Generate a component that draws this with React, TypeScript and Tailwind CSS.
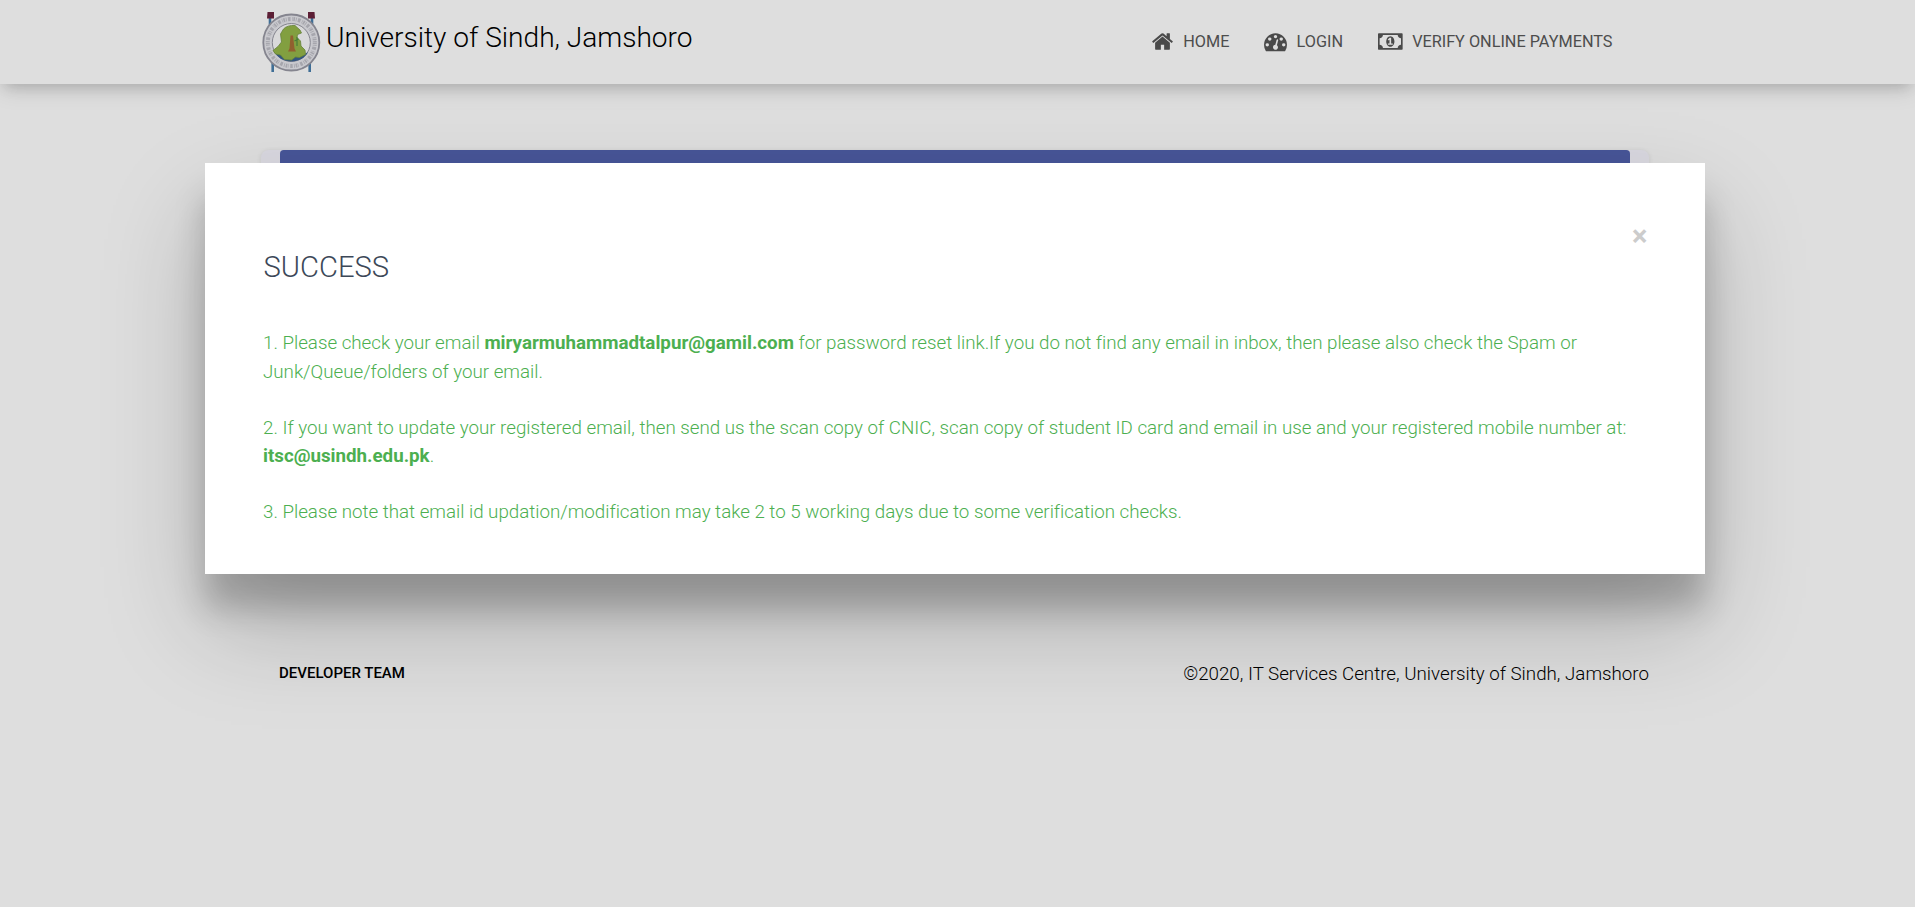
import type { ReactNode } from 'react';

const icons = {
  home: {
    viewBox: '0 0 1792 1792',
    d: 'M1472 992v480q0 26-19 45t-45 19h-384v-384h-256v384h-384q-26 0-45-19t-19-45v-480q0-1 .5-3t.5-3l575-474 575 474q1 2 1 6zm223-69l-62 74q-8 9-21 11h-3q-13 0-21-7l-692-577-692 577q-12 8-24 7-13-2-21-11l-62-74q-8-10-7-23.5t11-21.5l719-599q32-26 76-26t76 26l244 204v-195q0-14 9-23t23-9h192q14 0 23 9t9 23v408l219 182q10 8 11 21.5t-7 23.5z',
  },
  gauge: {
    viewBox: '0 0 1792 1792',
    d: 'M384 1152q0-53-37.5-90.5t-90.5-37.5-90.5 37.5-37.5 90.5 37.5 90.5 90.5 37.5 90.5-37.5 37.5-90.5zm192-448q0-53-37.5-90.5t-90.5-37.5-90.5 37.5-37.5 90.5 37.5 90.5 90.5 37.5 90.5-37.5 37.5-90.5zm428 481l101-382q6-26-7.5-48.5t-38.5-29.5-48 6.5-30 39.5l-101 382q-60 5-107 43.5t-63 98.5q-20 77 20 146t117 89 146-20 89-117q16-60-6-117t-72-91zm660-33q0-53-37.5-90.5t-90.5-37.5-90.5 37.5-37.5 90.5 37.5 90.5 90.5 37.5 90.5-37.5 37.5-90.5zm-640-640q0-53-37.5-90.5t-90.5-37.5-90.5 37.5-37.5 90.5 37.5 90.5 90.5 37.5 90.5-37.5 37.5-90.5zm448 192q0-53-37.5-90.5t-90.5-37.5-90.5 37.5-37.5 90.5 37.5 90.5 90.5 37.5 90.5-37.5 37.5-90.5zm320 448q0 261-141 483-19 29-54 29h-1402q-35 0-54-29-141-221-141-483 0-182 71-348t191-286 286-191 348-71 348 71 286 191 191 286 71 348z',
  },
  money: {
    viewBox: '0 0 1920 1792',
    d: 'M768 1152h384v-96h-128v-448h-114l-148 137 77 80q42-37 55-57h2v288h-128v96zm512-256q0 70-21 142t-59.5 134-101.5 101-138 39-138-39-101.5-101-59.5-134-21-142 21-142 59.5-134 101.5-101 138-39 138 39 101.5 101 59.5 134 21 142zm512 256v-512q-106 0-181-75t-75-181h-1152q0 106-75 181t-181 75v512q106 0 181 75t75 181h1152q0-106 75-181t181-75zm128-832v1152q0 26-19 45t-45 19h-1792q-26 0-45-19t-19-45v-1152q0-26 19-45t45-19h1792q26 0 45 19t19 45z',
  },
};

function NavLink({ icon, className, children }: { icon: keyof typeof icons; className: string; children: ReactNode }) {
  return (
    <a href="#" className={`flex items-start ${className}`}>
      <svg viewBox={icons[icon].viewBox} className="mt-px h-[23px] w-auto shrink-0 fill-[#4a4a4a]" aria-hidden="true">
        <path d={icons[icon].d} />
      </svg>
      <span className="pt-px text-[16.25px] leading-6 whitespace-nowrap text-[#4d4d4d]">{children}</span>
    </a>
  );
}

function Crest() {
  return (
    <svg viewBox="0 0 60 60" className="size-[60px] shrink-0" aria-hidden="true">
      <path d="M8 6v12M50 6v12M10.700 48v12M47.700 48v12" stroke="#3f6e96" strokeWidth="2.600" />
      <path d="M5.500 0h6.500v6.500h-7z M46 0h6.500l.5 6.500h-7z" fill="#5c1f35" />
      <circle cx="29.300" cy="30.500" r="28" fill="#c9c9ce" stroke="#85858f" strokeWidth="1.800" />
      <circle cx="29.300" cy="30.500" r="23.500" fill="none" stroke="#73737e" strokeWidth="4" strokeDasharray="1.600 .9 .8 1.300 2.600 1.700 .6 .7" opacity=".4" />
      <circle cx="29.300" cy="30.500" r="19" fill="#d9d9da" stroke="#85858f" strokeWidth="1" />
      <path d="M11.500 38.500c5 2.500 8 3 14 5 8 1.500 16 .5 20.500-3.500-3 6-9 9.500-16.500 9.500-8 0-14.500-4-18-11z" fill="#33557f" />
      <path d="M21.500 17c2-2.500 7-4 11.500-3.500l5 4.500 1.500 3-4 1.500-.5 3 3.500 3.500.5 5 4 4 .5 4.500-6 3-4-.5-4 3-7-.5-4-4.500-5-1-2.500-3.500 5-4 3.500-4.500-.5-4-.5-4z" fill="#829f40" stroke="#66833a" strokeWidth=".8" />
      <path d="M28.500 23.500h2.500l1.500 13 1.500 3h-8l1.500-3z" fill="#91602f" />
      <path d="M35 25v9M32.500 29l4-2" stroke="#467e38" strokeWidth="1.200" />
    </svg>
  );
}

export default function App() {
  return (
    <div className="relative h-screen overflow-hidden bg-[#dedede] font-['Roboto',sans-serif] text-[18.75px] font-light">
      <header className="relative h-[84px] bg-[#dedede] shadow-[0_5px_22.5px_0_rgba(0,0,0,0.12),0_8.75px_12.5px_-6.25px_rgba(0,0,0,0.15)]">
        <div className="flex items-start justify-between pr-[302.5px] pl-[262px]">
          <a href="#" className="flex items-start gap-1 pt-3">
            <Crest />
            <span className="pt-[5px] text-[28.125px] leading-[42px] tracking-[-0.015px] whitespace-nowrap text-black">University of Sindh, Jamshoro</span>
          </a>
          <nav className="flex items-start pt-[29px] font-normal">
            <NavLink icon="home" className="mr-[35px] gap-[9px]">HOME</NavLink>
            <NavLink icon="gauge" className="mr-[35.5px] gap-[9px]">LOGIN</NavLink>
            <NavLink icon="money" className="gap-[9px]">VERIFY ONLINE PAYMENTS</NavLink>
          </nav>
        </div>
      </header>

      <main className="mt-[66px] ml-[261px] h-[400px] w-[1388px] rounded-[7.5px] bg-[#d9d8e0] px-[19px] shadow-[0_1px_5px_rgba(0,0,0,0.1)]">
        <div className="h-[60px] rounded-[3.75px] bg-[#475598]" />
      </main>

      <footer className="flex items-start justify-between pt-[109px] pr-[266px] pl-[279px] text-black">
        <a href="#" className="text-[15px] leading-7 font-medium">DEVELOPER TEAM</a>
        <div className="pt-px leading-7">©2020, IT Services Centre, University of Sindh, Jamshoro</div>
      </footer>

      <div
        role="dialog"
        className="absolute top-[163px] left-[205px] h-[411px] w-[1500px] bg-white px-[58px] pt-[58px] shadow-[0_33.75px_30px_0_rgba(0,0,0,0.2),0_50px_96.25px_0_rgba(0,0,0,0.22)]"
      >
        <div className="flex h-7 items-center justify-end">
          <button className="mr-[-0.5px] pt-px text-[29px] leading-7 font-bold text-[#ccc]">×</button>
        </div>
        <h3 className="mt-[-2px] pl-[0.5px] text-[29.2px] leading-[41px] text-[#3c4858]">SUCCESS</h3>
        <div className="mt-[41.4px] flex flex-col gap-[28.125px] leading-[28.125px] tracking-[-0.01px] text-[#4caf50]">
          <p>
            1. Please check your email <b className="font-bold">miryarmuhammadtalpur@gamil.com</b> for password reset link.If you do not find any email in inbox, then please also check the Spam or Junk/Queue/folders of your email.
          </p>
          <p>
            2. If you want to update your registered email, then send us the scan copy of CNIC, scan copy of student ID card and email in use and your registered mobile number at: <b className="font-bold">itsc@usindh.edu.pk</b>.
          </p>
          <p>3. Please note that email id updation/modification may take 2 to 5 working days due to some verification checks.</p>
        </div>
      </div>
    </div>
  );
}
